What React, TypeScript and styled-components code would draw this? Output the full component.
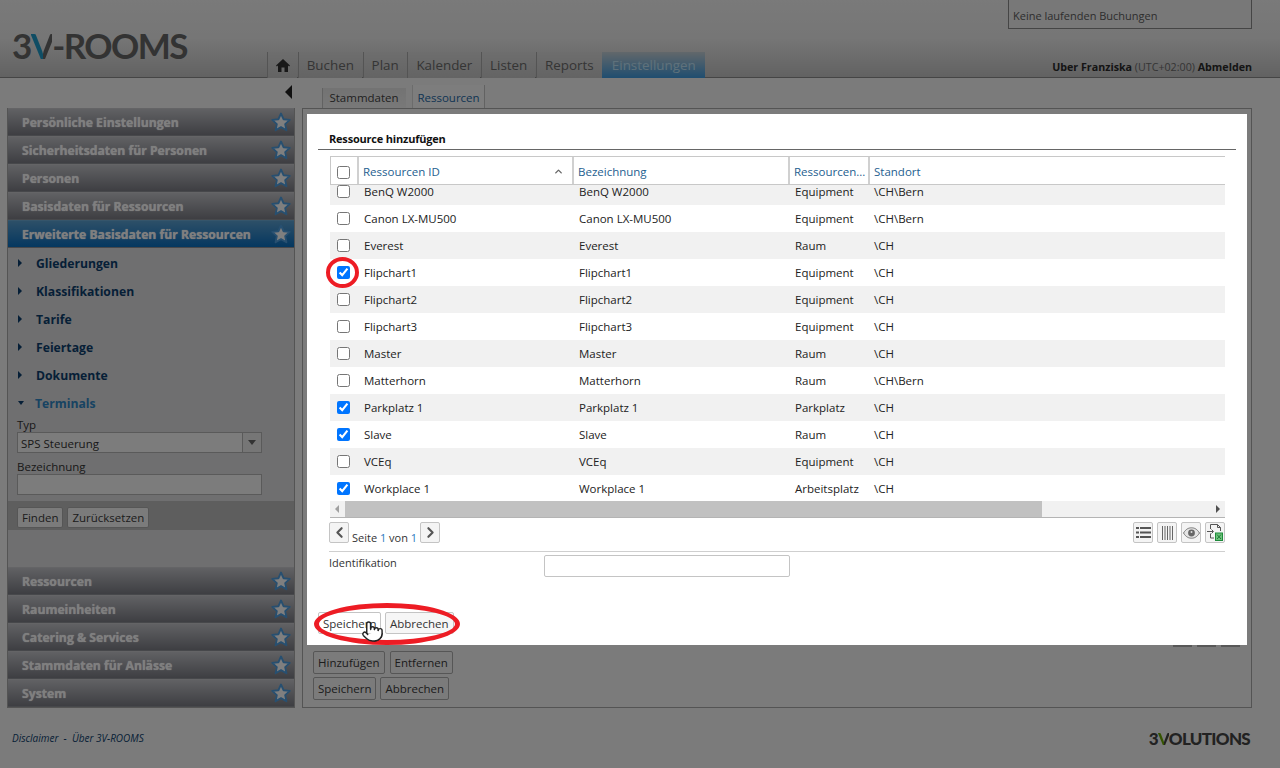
import * as React from 'react'
import styled, { createGlobalStyle } from 'styled-components'
import { ChevronLeft, ChevronRight, ChevronUp, Pointer } from 'lucide-react'

const topSections = ['Persönliche Einstellungen', 'Sicherheitsdaten für Personen', 'Personen', 'Basisdaten für Ressourcen']
const bottomSections = ['Ressourcen', 'Raumeinheiten', 'Catering & Services', 'Stammdaten für Anlässe', 'System']
const subItems = ['Gliederungen', 'Klassifikationen', 'Tarife', 'Feiertage', 'Dokumente']
const navItems = ['Buchen', 'Plan', 'Kalender', 'Listen', 'Reports']

const rows = [
  { id: 'BenQ W2000', type: 'Equipment', site: '\\CH\\Bern', checked: false },
  { id: 'Canon LX-MU500', type: 'Equipment', site: '\\CH\\Bern', checked: false },
  { id: 'Everest', type: 'Raum', site: '\\CH', checked: false },
  { id: 'Flipchart1', type: 'Equipment', site: '\\CH', checked: true, marked: true },
  { id: 'Flipchart2', type: 'Equipment', site: '\\CH', checked: false },
  { id: 'Flipchart3', type: 'Equipment', site: '\\CH', checked: false },
  { id: 'Master', type: 'Raum', site: '\\CH', checked: false },
  { id: 'Matterhorn', type: 'Raum', site: '\\CH\\Bern', checked: false },
  { id: 'Parkplatz 1', type: 'Parkplatz', site: '\\CH', checked: true },
  { id: 'Slave', type: 'Raum', site: '\\CH', checked: true },
  { id: 'VCEq', type: 'Equipment', site: '\\CH', checked: false },
  { id: 'Workplace 1', type: 'Arbeitsplatz', site: '\\CH', checked: true },
]

const Star = () => (
  <svg width="20" height="20" viewBox="0 0 24 24">
    <path
      d="M12 1.800l3.100 6.900 7.400.8-5.500 5 1.500 7.400-6.500-3.700-6.500 3.700 1.500-7.400-5.500-5 7.400-.8z"
      fill="#ffffff"
      stroke="#4f9fe0"
      strokeWidth="2.200"
      strokeLinejoin="round"
    />
  </svg>
)

const HomeIcon = () => (
  <svg width="14" height="13" viewBox="0 0 14 13">
    <path d="M7 0l7 6.400-.9 1L12 6.500V13H8.500V8.500h-3V13H2V6.500L.9 7.400 0 6.400z" fill="#333" />
  </svg>
)

const ListIcon = () => (
  <svg width="15" height="13" viewBox="0 0 15 13" fill="#555">
    <rect x="0" y="1" width="3" height="2" />
    <rect x="4" y="1" width="11" height="2" />
    <rect x="0" y="5.500" width="3" height="2" />
    <rect x="4" y="5.500" width="11" height="2" />
    <rect x="0" y="10" width="3" height="2" />
    <rect x="4" y="10" width="11" height="2" />
  </svg>
)

const ColumnsIcon = () => (
  <svg width="11" height="14" viewBox="0 0 11 14" fill="#666">
    <rect x="0" y="0" width="1" height="14" />
    <rect x="2.500" y="0" width="1" height="14" />
    <rect x="5" y="0" width="1" height="14" />
    <rect x="7.500" y="0" width="1" height="14" />
    <rect x="10" y="0" width="1" height="14" />
  </svg>
)

const EyeIcon = () => (
  <svg width="17" height="12" viewBox="0 0 17 12">
    <path d="M.5 6C3 2 5.500.8 8.500.8S14 2 16.500 6C14 10 11.500 11.200 8.500 11.200S3 10 .5 6z" fill="#e4e4e4" stroke="#777" />
    <circle cx="8.500" cy="6" r="3.400" fill="#666" />
    <circle cx="8.500" cy="5" r="1" fill="#ddd" />
  </svg>
)

const ExportIcon = () => (
  <svg width="16" height="17" viewBox="0 0 16 17" fill="none">
    <path d="M3.500 5V.5h7l3 3V7M3.500 9.500V14H7" stroke="#555" />
    <path d="M10.500.5v3h3" stroke="#555" />
    <path d="M0 7.500h6M4.500 5.500l2 2-2 2" stroke="#555" />
    <rect x="8.500" y="9" width="7" height="7.500" fill="#6cc27a" stroke="#1d8a3a" />
    <path d="M10 10.500l4 4.500M14 10.500l-4 4.500" stroke="#1d7a35" />
  </svg>
)

const App = () => {
  return (
    <Page>
      <GlobalStyle />
      <Header>
        <Logo>
          3<LogoV>V</LogoV>-ROOMS
        </Logo>
        <Nav>
          <NavItem $home>
            <HomeIcon />
          </NavItem>
          {navItems.map((item) => (
            <NavItem key={item}>{item}</NavItem>
          ))}
          <NavItem $active>Einstellungen</NavItem>
        </Nav>
        <HeaderRight>
          <StatusBox>Keine laufenden Buchungen</StatusBox>
          <UserLine>
            <b>Uber Franziska</b> (UTC+02:00) <b>Abmelden</b>
          </UserLine>
        </HeaderRight>
      </Header>

      <Body>
        <SideColumn>
          <Collapse>
            <CollapseArrow />
          </Collapse>
          <Sidebar>
            {topSections.map((section) => (
              <Section key={section}>
                {section}
                <Star />
              </Section>
            ))}
            <Section $active>
              Erweiterte Basisdaten für Ressourcen
              <Star />
            </Section>
            <SubList>
              {subItems.map((item) => (
                <SubItem key={item}>
                  <ClosedArrow />
                  {item}
                </SubItem>
              ))}
              <SubItem $open>
                <OpenArrow />
                Terminals
              </SubItem>
            </SubList>
            <FilterForm>
              <FieldLabel>Typ</FieldLabel>
              <SelectBox>
                <SelectValue>SPS Steuerung</SelectValue>
                <SelectButton>
                  <OpenCaret />
                </SelectButton>
              </SelectBox>
              <FieldLabel>Bezeichnung</FieldLabel>
              <FilterInput />
            </FilterForm>
            <FilterBar>
              <Button>Finden</Button>
              <Button>Zurücksetzen</Button>
            </FilterBar>
            <SideSpacer />
            {bottomSections.map((section) => (
              <Section key={section}>
                {section}
                <Star />
              </Section>
            ))}
          </Sidebar>
        </SideColumn>

        <MainColumn>
          <SubTabs>
            <SubTab>Stammdaten</SubTab>
            <SubTab $active>Ressourcen</SubTab>
          </SubTabs>
          <Panel>
            <PanelTools>
              <ToolStub />
              <ToolStub />
              <ToolStub />
            </PanelTools>
            <PanelButtons>
              <Button>Hinzufügen</Button>
              <Button>Entfernen</Button>
            </PanelButtons>
            <PanelButtons>
              <Button>Speichern</Button>
              <Button>Abbrechen</Button>
            </PanelButtons>
          </Panel>
        </MainColumn>
      </Body>

      <Footer>
        <FooterLinks>Disclaimer&nbsp;&nbsp;-&nbsp;&nbsp;Über 3V-ROOMS</FooterLinks>
        <Brand>
          3<BrandV>V</BrandV>OLUTIONS
        </Brand>
      </Footer>

      <Overlay />
      <Dialog>
        <DialogTitle>Ressource hinzufügen</DialogTitle>
        <Grid>
          <HeadRow>
            <CheckHead>
              <Checkbox type="checkbox" readOnly />
            </CheckHead>
            <HeadCell>
              Ressourcen ID
              <ChevronUp size={11} strokeWidth={3} color="#666" />
            </HeadCell>
            <HeadCell>Bezeichnung</HeadCell>
            <HeadCell>Ressourcen...</HeadCell>
            <HeadCell>Standort</HeadCell>
          </HeadRow>
          <GridBody>
            <GridRows>
              {rows.map((row) => (
                <Row key={row.id}>
                  <CheckCell>
                    <Checkbox type="checkbox" checked={row.checked} readOnly />
                    {row.marked && <RedCircle />}
                  </CheckCell>
                  <Cell>{row.id}</Cell>
                  <Cell>{row.id}</Cell>
                  <Cell>{row.type}</Cell>
                  <Cell>{row.site}</Cell>
                </Row>
              ))}
            </GridRows>
          </GridBody>
          <ScrollBar>
            <ScrollLeft />
            <ScrollThumb />
            <ScrollRight />
          </ScrollBar>
          <Pager>
            <IconButton>
              <ChevronLeft size={17} strokeWidth={3} color="#555" />
            </IconButton>
            <PagerText>
              Seite <PageNo>1</PageNo> von <PageNo>1</PageNo>
            </PagerText>
            <IconButton>
              <ChevronRight size={17} strokeWidth={3} color="#555" />
            </IconButton>
            <PagerTools>
              <IconButton>
                <ListIcon />
              </IconButton>
              <IconButton>
                <ColumnsIcon />
              </IconButton>
              <IconButton>
                <EyeIcon />
              </IconButton>
              <IconButton>
                <ExportIcon />
              </IconButton>
            </PagerTools>
          </Pager>
        </Grid>
        <IdentRow>
          <IdentLabel>Identifikation</IdentLabel>
          <IdentInput />
        </IdentRow>
        <DialogButtons>
          <DialogButton $hover>Speichern</DialogButton>
          <DialogButton>Abbrechen</DialogButton>
          <RedEllipse />
          <HandCursor>
            <Pointer size={23} fill="#fff" color="#222" strokeWidth={1.5} />
          </HandCursor>
        </DialogButtons>
      </Dialog>
    </Page>
  )
}

export default App

// Styles
const GlobalStyle = createGlobalStyle`
  html, body {
    margin: 0;
    height: 100%;
    overflow: hidden;
    background: #f6f6f6;
  }

  body {
    font-family: "Open Sans", "Noto Sans", sans-serif;
    font-size: 11.5px;
  }

  * {
    box-sizing: border-box;
  }
`

const Page = styled.div`
  position: relative;
  width: 1280px;
  height: 768px;
  overflow: hidden;
  background: #f6f6f6;
`

const Header = styled.header`
  display: flex;
  align-items: flex-end;
  height: 78px;
  padding: 0 28px 0 12px;
  background: linear-gradient(#f4f4f4 0%, #ececec 50%, #c4c4c4 100%);
  border-bottom: 1px solid #8a8a8a;
`

const Logo = styled.div`
  width: 255px;
  margin-bottom: 14px;
  font-family: "Lato", sans-serif;
  font-size: 35px;
  line-height: 36px;
  font-weight: 700;
  letter-spacing: -1.6px;
  color: #666;
`

const LogoV = styled.span`
  background: linear-gradient(90deg, #1f9bc8 55%, #666 55%);
  -webkit-background-clip: text;
  background-clip: text;
  color: transparent;
`

const Nav = styled.nav`
  display: flex;
  height: 26px;
  margin-bottom: -1px;
`

const NavItem = styled.div<{ $home?: boolean; $active?: boolean }>`
  display: flex;
  align-items: center;
  justify-content: center;
  height: 26px;
  padding: 0 ${(p) => (p.$home ? '7.5px' : '8px')};
  margin-right: 0.7px;
  font-size: 13.4px;
  color: ${(p) => (p.$active ? '#bfe3f7' : '#6a6a6a')};
  border-left: 1px solid #a8a8a8;
  background: ${(p) => (p.$active ? 'linear-gradient(#c4cfd6, #3f9ce0)' : 'linear-gradient(#dcdcdc, #c8c8c8)')};
  ${(p) => p.$active && 'border-left: none; padding: 0 9.5px;'}
`

const HeaderRight = styled.div`
  display: flex;
  flex-direction: column;
  align-items: flex-end;
  justify-content: space-between;
  height: 78px;
  margin-left: auto;
`

const StatusBox = styled.div`
  width: 244px;
  height: 30px;
  padding: 10px 4px 0;
  font-size: 11px;
  line-height: 14px;
  color: #5c5c5c;
  background: #f0f0f0;
  border: 1px solid #8a8a8a;
  border-top: none;
`

const UserLine = styled.div`
  margin-bottom: 2px;
  font-size: 10.7px;
  line-height: 15px;
  color: #6a6a6a;

  b {
    font-weight: 700;
    color: #2a2a2a;
  }
`

const Body = styled.div`
  display: grid;
  grid-template-columns: 288px 950px;
  column-gap: 7px;
  padding-left: 7px;
`

const SideColumn = styled.div`
  display: flex;
  flex-direction: column;
`

const Collapse = styled.div`
  display: flex;
  align-items: center;
  justify-content: flex-end;
  height: 30px;
  padding: 0 3px 3px 0;
`

const CollapseArrow = styled.span`
  border-style: solid;
  border-width: 7px 7px 7px 0;
  border-color: transparent #222 transparent transparent;
`

const Sidebar = styled.aside`
  display: flex;
  flex-direction: column;
  height: 600px;
  background: #dedee0;
  border: 1px solid #a8a8a8;
  border-top: none;
`

const Section = styled.div<{ $active?: boolean }>`
  display: flex;
  align-items: center;
  justify-content: space-between;
  flex: none;
  height: 28px;
  padding: 0 3px 0 14px;
  font-size: 12.2px;
  font-weight: 700;
  color: #fff;
  text-shadow: 0 0 1px #fff;
  background: ${(p) => (p.$active ? 'linear-gradient(#5a9fd0, #0a6fc0)' : 'linear-gradient(#c2c3c8, #7c7d85)')};
  border-top: 1px solid ${(p) => (p.$active ? '#6aaad6' : '#c8c9cc')};
  border-bottom: 1px solid #8f9096;
`

const SubList = styled.div`
  display: flex;
  flex-direction: column;
  padding-top: 1px;
`

const SubItem = styled.div<{ $open?: boolean }>`
  display: flex;
  align-items: center;
  height: 28px;
  padding-left: 10px;
  font-size: 12.2px;
  font-weight: 700;
  color: ${(p) => (p.$open ? '#2f86c4' : '#0d3f6e')};
`

const ClosedArrow = styled.span`
  width: 0;
  margin-right: 14px;
  border-style: solid;
  border-width: 4px 0 4px 4px;
  border-color: transparent transparent transparent #0d3f6e;
`

const OpenArrow = styled.span`
  width: 0;
  margin: 0 11px 0 0;
  border-style: solid;
  border-width: 4px 3.500px 0 3.500px;
  border-color: #0d3f6e transparent transparent transparent;
`

const FilterForm = styled.div`
  display: flex;
  flex-direction: column;
  padding: 0 32px 0 9px;
`

const FieldLabel = styled.label`
  font-size: 11.5px;
  line-height: 15px;
  color: #333;
`

const SelectBox = styled.div`
  display: flex;
  align-items: center;
  justify-content: space-between;
  height: 21px;
  margin-bottom: 6px;
  padding-left: 3px;
  background: #f8f8f8;
  border: 1px solid #b4b4b4;
`

const SelectValue = styled.span`
  padding-top: 1px;
  font-size: 11.5px;
  color: #333;
`

const SelectButton = styled.div`
  display: flex;
  align-items: center;
  justify-content: center;
  width: 19px;
  height: 19px;
  background: #ededed;
  border-left: 1px solid #b4b4b4;
`

const OpenCaret = styled.span`
  border-style: solid;
  border-width: 5px 4.500px 0 4.500px;
  border-color: #666 transparent transparent transparent;
`

const FilterInput = styled.div`
  height: 21px;
  background: #f8f8f8;
  border: 1px solid #b4b4b4;
`

const FilterBar = styled.div`
  display: flex;
  align-items: center;
  gap: 4px;
  height: 29px;
  margin-top: 6px;
  padding: 3px 0 0 9px;
  background: #bcbcbc;

  & > div {
    height: 21px;
  }
`

const SideSpacer = styled.div`
  flex: 1;
`

const Button = styled.div`
  display: flex;
  align-items: center;
  height: 22px;
  padding: 0 4px;
  font-size: 11.5px;
  color: #3a3a3a;
  background: #f6f6f6;
  border: 1px solid #adadad;
  border-radius: 2px;
`

const MainColumn = styled.main`
  display: flex;
  flex-direction: column;
`

const SubTabs = styled.div`
  display: flex;
  align-items: flex-end;
  gap: 6px;
  height: 30px;
  padding-left: 20px;
`

const SubTab = styled.div<{ $active?: boolean }>`
  display: flex;
  align-items: center;
  justify-content: center;
  height: ${(p) => (p.$active ? '23px' : '20px')};
  width: ${(p) => (p.$active ? '73px' : '84px')};
  padding: ${(p) => (p.$active ? '2px 0 0' : '0 0 1px')};
  font-size: 11.5px;
  color: ${(p) => (p.$active ? '#1f6aa8' : '#444')};
  background: ${(p) => (p.$active ? '#fafafa' : 'linear-gradient(#e6e6e6, #f2f2f2)')};
  border-left: 1px solid ${(p) => (p.$active ? '#d8d8d8' : '#c4c4c4')};
  border-right: 1px solid ${(p) => (p.$active ? '#c4c4c4' : 'transparent')};
`

const Panel = styled.section`
  display: flex;
  flex-direction: column;
  height: 600px;
  padding: 536px 10px 0;
  background: #f6f6f6;
  border: 1px solid #a8a8a8;
`

const PanelTools = styled.div`
  display: flex;
  justify-content: flex-end;
  gap: 5px;
  height: 6px;
  padding-right: 1px;
`

const ToolStub = styled.div`
  width: 19px;
  height: 2px;
  background: #b0b0b0;
`

const PanelButtons = styled.div`
  display: flex;
  gap: 5px;
  height: 26px;

  & > div {
    height: 23px;
  }

  & + & {
    gap: 4px;
  }
`

const Footer = styled.footer`
  display: flex;
  align-items: center;
  justify-content: space-between;
  height: 60px;
  padding: 0 30px 0 12px;
`

const FooterLinks = styled.div`
  font-size: 10px;
  font-style: italic;
  color: #0d3f6e;
`

const Brand = styled.div`
  font-family: "Lato", sans-serif;
  font-size: 17px;
  font-weight: 900;
  letter-spacing: -0.7px;
  color: #444;
`

const BrandV = styled.span`
  background: linear-gradient(90deg, #6aa800 55%, #444 55%);
  -webkit-background-clip: text;
  background-clip: text;
  color: transparent;
`

const Overlay = styled.div`
  position: absolute;
  inset: 0;
  background: rgba(0, 0, 0, 0.5);
`

const Dialog = styled.div`
  position: absolute;
  left: 307px;
  top: 114px;
  display: flex;
  flex-direction: column;
  width: 940px;
  height: 531px;
  padding: 0 11px;
  background: #fff;
  color: #222;
`

const DialogTitle = styled.h2`
  height: 36px;
  margin: 0;
  padding: 17px 0 0 11px;
  font-size: 11px;
  line-height: 15px;
  font-weight: 700;
  letter-spacing: -0.2px;
  color: #111;
  border-bottom: 1px solid #666;
`

const Grid = styled.div`
  margin: 6px 11px 0 12px;
`

const columns = '28px 215px 216px 79px 1fr'

const HeadRow = styled.div`
  display: grid;
  grid-template-columns: 27px 215px 216px 80px 1fr;
  height: 29px;
  border-top: 1px solid #c8c8c8;
  border-bottom: 1px solid #c8c8c8;
`

const HeadCell = styled.div`
  display: flex;
  align-items: center;
  justify-content: space-between;
  padding: 1px 8px 0 4px;
  font-size: 11.5px;
  color: #24608f;
  border-left: 2px solid #d0d0d0;
  white-space: nowrap;
  overflow: hidden;
`

const CheckHead = styled.div`
  display: flex;
  align-items: center;
  justify-content: center;
  padding: 4px 1px 0 0;
  border-left: 1px solid #c8c8c8;
`

const Checkbox = styled.input`
  width: 13px;
  height: 13px;
  margin: 0;
`

const GridBody = styled.div`
  display: flow-root;
  height: 316px;
  clip-path: inset(0 0 0 -10px);
`

const GridRows = styled.div`
  margin-top: -7px;
`

const Row = styled.div`
  display: grid;
  grid-template-columns: ${columns};
  height: 27px;
  font-size: 11.5px;

  &:nth-child(odd) {
    background: #f1f1f1;
  }
`

const Cell = styled.div`
  display: flex;
  align-items: center;
  padding-left: 6px;
  white-space: nowrap;
  color: #222;
`

const CheckCell = styled.div`
  position: relative;
  display: flex;
  align-items: center;
  justify-content: center;
  padding-right: 1px;
`

const RedCircle = styled.span`
  position: absolute;
  left: -4px;
  top: -2px;
  width: 33px;
  height: 31px;
  border: 4.500px solid #ed1c24;
  border-radius: 50%;
`

const ScrollBar = styled.div`
  display: flex;
  align-items: center;
  height: 17px;
  background: #f1f1f1;
  border-bottom: 1px solid #b4b4b4;
`

const ScrollLeft = styled.span`
  margin: 0 6px 0 5px;
  border-style: solid;
  border-width: 4px 4px 4px 0;
  border-color: transparent #a0a0a0 transparent transparent;
`

const ScrollThumb = styled.span`
  width: 697px;
  height: 16px;
  background: #c1c1c1;
`

const ScrollRight = styled.span`
  margin: 0 5px 0 auto;
  border-style: solid;
  border-width: 4px 0 4px 4px;
  border-color: transparent transparent transparent #505050;
`

const Pager = styled.div`
  display: flex;
  align-items: flex-start;
  height: 34px;
  margin-left: -1px;
  padding: 4px 0 0;
  border-bottom: 1px solid #cfcfcf;
`

const IconButton = styled.div`
  display: flex;
  align-items: center;
  justify-content: center;
  width: 20px;
  height: 21px;
  background: #f4f4f4;
  border: 1px solid #c4c4c4;
  border-radius: 2px;
`

const PagerText = styled.div`
  margin: 8px 3px 0;
  font-size: 11px;
  line-height: 15px;
  color: #333;
`

const PageNo = styled.span`
  color: #2b7ac0;
`

const PagerTools = styled.div`
  display: flex;
  gap: 4px;
  margin-left: auto;
`

const IdentRow = styled.div`
  display: flex;
  align-items: flex-start;
  margin: 3px 0 0 11px;
`

const IdentLabel = styled.div`
  width: 215px;
  font-size: 11px;
  line-height: 15px;
  color: #333;
`

const IdentInput = styled.div`
  width: 246px;
  height: 22px;
  background: #fff;
  border: 1px solid #c4c4c4;
  border-radius: 2px;
`

const DialogButtons = styled.div`
  position: relative;
  display: flex;
  gap: 3.500px;
  margin-top: 35px;
`

const DialogButton = styled.div<{ $hover?: boolean }>`
  display: flex;
  align-items: center;
  height: 22px;
  padding: 0 4px;
  font-size: 11.5px;
  color: #333;
  background: ${(p) => (p.$hover ? '#fff' : '#f6f6f6')};
  border: 1px solid #c4c4c4;
  border-radius: 2px;
`

const RedEllipse = styled.span`
  position: absolute;
  left: -4px;
  top: -9px;
  width: 146px;
  height: 42px;
  border: 5px solid #ed1c24;
  border-radius: 50%;
`

const HandCursor = styled.span`
  position: absolute;
  left: 43px;
  top: 8px;
  line-height: 0;
`
